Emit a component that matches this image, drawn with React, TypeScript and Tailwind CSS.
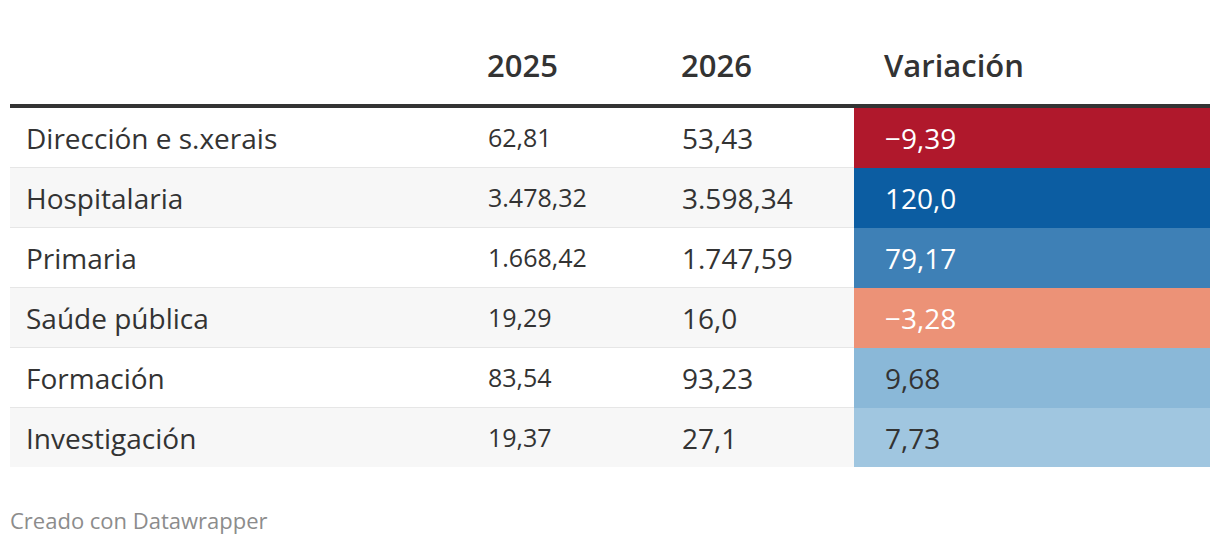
const ROWS = [
  { name: "Dirección e s.xerais", a: "62,81", b: "53,43", v: "−9,39", bg: "bg-[#b0182c]", fg: "text-white" },
  { name: "Hospitalaria", a: "3.478,32", b: "3.598,34", v: "120,0", bg: "bg-[#0c5da2]", fg: "text-white" },
  { name: "Primaria", a: "1.668,42", b: "1.747,59", v: "79,17", bg: "bg-[#3e80b6]", fg: "text-white" },
  { name: "Saúde pública", a: "19,29", b: "16,0", v: "−3,28", bg: "bg-[#ec9277]", fg: "text-white" },
  { name: "Formación", a: "83,54", b: "93,23", v: "9,68", bg: "bg-[#8ab8d8]", fg: "text-[#333333]" },
  { name: "Investigación", a: "19,37", b: "27,1", v: "7,73", bg: "bg-[#a0c6e0]", fg: "text-[#333333]" },
];

const COLS = "grid grid-cols-[447px_194px_203px_356px]";

export default function App() {
  return (
    <div className="w-[1220px] h-[546px] bg-white px-[10px] text-[#333333] font-['Open_Sans',sans-serif]">
      <div className={`${COLS} h-[104px] items-end pb-[23px] text-[31px] leading-[31px] font-semibold`}>
        <div />
        <div className="pl-[30px]">2025</div>
        <div className="pl-[30px]">2026</div>
        <div className="pl-[30px]">Variación</div>
      </div>
      <div className="h-[4px] bg-[#333333]" />
      <div>
        {ROWS.map((r, i) => {
          const last = i === ROWS.length - 1;
          const rowBg = i % 2 === 1 ? "bg-[#f7f7f7]" : "bg-white";
          const cell = `flex items-center ${rowBg} ${last ? "" : "border-b border-[#e6e6e6]"}`;
          return (
            <div key={r.name} className={`${COLS} ${last ? "h-[59px]" : "h-[60px]"}`}>
              <div className={`${cell} pl-[16px] text-[28px]`}>{r.name}</div>
              <div className={`${cell} pl-[31px] text-[25px]`}>{r.a}</div>
              <div className={`${cell} pl-[31px] text-[28px]`}>{r.b}</div>
              <div className={`flex items-center pl-[31px] text-[28px] ${r.bg} ${r.fg}`}>{r.v}</div>
            </div>
          );
        })}
      </div>
      <div className="mt-[42px] text-[22px] leading-[22px] text-[#8c8c8c]">Creado con Datawrapper</div>
    </div>
  );
}
